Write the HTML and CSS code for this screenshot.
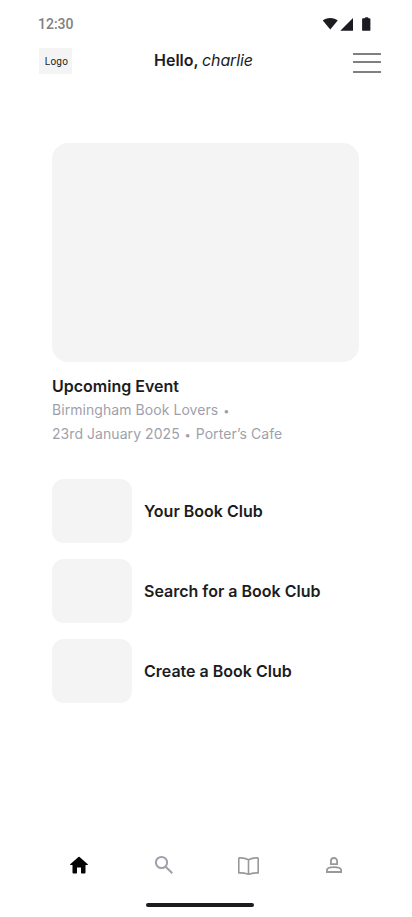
FILE: index.html
```html
<!DOCTYPE html>
<html lang="en">
<head>
<meta charset="utf-8">
<meta name="viewport" content="width=device-width, initial-scale=1">
<title>Book Club</title>
<link rel="stylesheet" href="styles.css">
</head>
<body>
<div class="screen">
  <div class="status">
    <span class="time">12:30</span>
    <svg class="indicators" width="50" height="16" viewBox="0 0 50 16" fill="#1d1b20">
      <path d="M0.8 4.6C2.4 3 5.2 2 8.2 2s5.900 1 7.500 2.600L8.250 13.600z"/>
      <path d="M18.300 14.800L31 2v12.800z"/>
      <path d="M41 2.300h1.700q.3-1 1.300-1h1.200q1 0 1.300 1h1q.9 0 .9.900v10.700q0 .9-.9.900h-6.500q-.9 0-.9-.9V3.200q0-.9.900-.9z"/>
    </svg>
  </div>
  <header class="header">
    <div class="logo">Logo</div>
    <div class="greeting"><strong>Hello,</strong> <em>charlie</em></div>
    <svg class="menu" width="28" height="20" viewBox="0 0 28 20" fill="#808080">
      <path d="M0 0h28v2H0zM0 8h28v2H0zM0 18h28v2H0z"/>
    </svg>
  </header>
  <main class="content">
    <div class="event-image"></div>
    <h2 class="event-title">Upcoming Event</h2>
    <p class="event-details">Birmingham Book Lovers <span class="dot">•</span><br>23rd January 2025 <span class="dot">•</span> Porter’s Cafe</p>
    <ul class="links">
      <li class="link"><span class="thumb"></span>Your Book Club</li>
      <li class="link"><span class="thumb"></span>Search for a Book Club</li>
      <li class="link"><span class="thumb"></span>Create a Book Club</li>
    </ul>
  </main>
  <nav class="nav">
    <svg width="24" height="24" viewBox="0 0 24 24" fill="#050505"><path d="M11.400 3.900q.6-.5 1.200 0l8.200 7.300q.4.800-.5.900H18.500v7.500q0 .9-.9.900H14.700q-.7 0-.7-.7V14.600h-4v5.200q0 .7-.7.700H6.400q-.9 0-.9-.9v-7.500H3.700q-.9-.1-.5-.9z"/></svg>
    <svg width="24" height="24" viewBox="0 0 24 24" fill="none" stroke="#a09fac" stroke-width="2"><circle cx="9.500" cy="9.500" r="5.600"/><path d="M13.700 13.700l6.600 6.600"/></svg>
    <svg width="24" height="24" viewBox="0 0 24 24" fill="none" stroke="#999" stroke-width="1.600" stroke-linejoin="round"><path d="M11.500 6.800Q7.100 4.500 2.500 4.900q-.7.100-.7.800v14.200q4.900-.2 9.700 1.400 4.800-1.600 9.700-1.400V5.700q0-.7-.7-.8Q15.900 4.500 11.500 6.800zM11.500 6.800v14.500"/></svg>
    <svg width="24" height="24" viewBox="0 0 24 24" fill="none" stroke="#999" stroke-width="1.800"><path d="M8.900 11.200V8.100a3.100 3.100 0 0 1 6.200 0v3.100zM4.900 19v-1.700C4.900 15 8 14.200 12 14.200s7.100.8 7.100 3.100V19z"/></svg>
  </nav>
  <div class="home-bar"></div>
</div>
</body>
</html>
```

FILE: styles.css
```css
* {
  box-sizing: border-box;
}

body {
  margin: 0;
  background: #fff;
  color: #1c1c1f;
  font-family: Inter, "Liberation Sans", sans-serif;
}

.screen {
  width: 412px;
  height: 917px;
  display: flex;
  flex-direction: column;
  overflow: hidden;
}

.status {
  height: 48px;
  padding: 0 38px;
  display: flex;
  align-items: center;
  justify-content: space-between;
}

.time {
  font: 500 14px/20px Roboto, sans-serif;
  color: #808080;
}

.indicators {
  margin-right: 2px;
}

.header {
  height: 26px;
  padding: 0 31px 0 39px;
  display: grid;
  grid-template-columns: 115px 1fr 28px;
  align-items: center;
}

.logo {
  width: 33px;
  height: 26px;
  padding-left: 2px;
  background: #f4f4f4;
  font: 400 10px/27px Roboto, sans-serif;
  letter-spacing: 0.25px;
  text-align: center;
}

.greeting {
  margin-top: -2px;
  font-size: 16px;
  line-height: 24px;
  white-space: nowrap;
}

.greeting em {
  margin-left: -1px;
  letter-spacing: -0.15px;
}

.greeting strong,
.event-title,
.link {
  font-weight: 600;
}

.menu {
  margin-top: 4px;
}

.content {
  padding: 69px 53px 0 52px;
}

.event-image {
  height: 219px;
  border-radius: 16px;
  background: #f4f4f4;
}

.event-title {
  margin: 12px 0 0;
  font-size: 16px;
  line-height: 24px;
}

.event-details {
  margin: 0;
  font-size: 14px;
  line-height: 24px;
  letter-spacing: 0.06px;
  color: #a09fac;
}

.dot {
  display: inline-block;
  width: 8px;
  font-size: 11px;
  line-height: 1;
  text-align: center;
}

.links {
  margin: 33px 0 0;
  padding: 0;
  list-style: none;
  display: grid;
  gap: 16px;
}

.link {
  display: flex;
  align-items: center;
  gap: 12px;
  font-size: 16px;
  line-height: 24px;
}

.thumb {
  width: 80px;
  height: 64px;
  border-radius: 12px;
  background: #f4f4f4;
}

.nav {
  margin-top: auto;
  padding: 0 66px 26px 67px;
  display: flex;
  justify-content: space-between;
}

.home-bar {
  width: 108px;
  height: 4px;
  margin: 0 0 10px 146px;
  border-radius: 2px;
  background: #1d1b20;
}
```
